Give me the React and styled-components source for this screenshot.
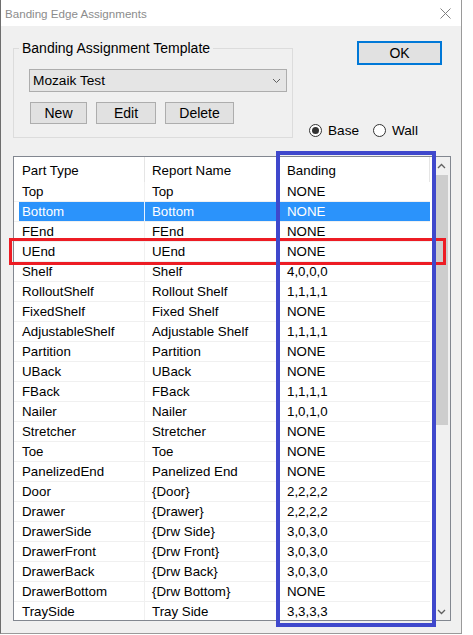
import React from 'react';
import styled, { createGlobalStyle } from 'styled-components';

const GlobalStyle = createGlobalStyle`
  html, body {
    margin: 0;
    padding: 0;
    background: #ffffff;
  }
  body {
    font-family: "Liberation Sans", Arial, sans-serif;
    font-size: 13.3px;
    color: #000;
  }
`;

const Window = styled.div`
  position: relative;
  width: 462px;
  height: 634px;
  box-sizing: border-box;
  border-left: 1px solid #6e6e6e;
  border-right: 1px solid #9a9a9a;
  border-bottom: 1px solid #9a9a9a;
  display: flex;
  flex-direction: column;
  background: #f0f0f0;
  overflow: hidden;
`;

const TitleBar = styled.div`
  height: 26px;
  flex: none;
  background: #ffffff;
  display: flex;
  align-items: center;
  justify-content: space-between;
  padding: 0 10px 0 4px;
`;

const Title = styled.span`
  font-size: 11.6px;
  color: #8c8c8c;
`;

const Body = styled.div`
  flex: 1;
  display: flex;
  flex-direction: column;
  padding: 0 10px 12px 12px;
`;

const TopArea = styled.div`
  display: flex;
  height: 112px;
  flex: none;
`;

const GroupBox = styled.div`
  position: relative;
  width: 280px;
  height: 90px;
  margin-top: 22px;
  box-sizing: border-box;
  border: 1px solid #dcdcdc;
  padding: 20px 0 0 15px;
`;

const Legend = styled.span`
  position: absolute;
  top: -9px;
  left: 5px;
  padding: 0 3px;
  line-height: 16px;
  font-size: 14px;
  background: #f0f0f0;
`;

const Select = styled.div`
  width: 258px;
  height: 23px;
  box-sizing: border-box;
  border: 1px solid #adadad;
  background: #e5e5e5;
  display: flex;
  align-items: center;
  justify-content: space-between;
  padding: 0 5px 0 3px;
  font-size: 13.7px;
`;

const ButtonRow = styled.div`
  display: flex;
  gap: 9px;
  margin: 10px 0 0 1px;
`;

const Button = styled.div`
  width: ${p => p.w}px;
  height: ${p => p.h || 22}px;
  box-sizing: border-box;
  border: ${p => (p.primary ? '2px solid #0078d7' : '1px solid #adadad')};
  background: #e1e1e1;
  display: flex;
  align-items: center;
  justify-content: center;
  font-size: 14px;
`;

const RightColumn = styled.div`
  flex: 1;
  display: flex;
  flex-direction: column;
  align-items: flex-start;
  padding-top: 15px;
`;

const OkWrap = styled.div`
  margin-left: 64px;
`;

const RadioGroup = styled.div`
  display: flex;
  align-items: center;
  margin: 57px 0 0 16px;
  font-size: 13.6px;
  height: 16px;
`;

const RadioLabel = styled.label`
  display: flex;
  align-items: center;
  margin-right: ${p => p.gap || 0}px;
`;

const RadioCircle = styled.span`
  width: 13px;
  height: 13px;
  box-sizing: border-box;
  border-radius: 50%;
  border: 1px solid #333;
  background: #fff;
  display: flex;
  align-items: center;
  justify-content: center;
  margin-right: 6px;

  &::after {
    content: '';
    width: 7px;
    height: 7px;
    border-radius: 50%;
    background: ${p => (p.checked ? '#333' : 'transparent')};
  }
`;

const ListView = styled.div`
  margin-top: 18px;
  height: 465px;
  box-sizing: border-box;
  border: 1px solid #828790;
  background: #ffffff;
  display: flex;
  overflow: hidden;
`;

const ListArea = styled.div`
  flex: 1;
  overflow: hidden;
`;

const Header = styled.div`
  display: flex;
  height: 25px;
`;

const HeaderCell = styled.div`
  width: ${p => p.w}px;
  box-sizing: border-box;
  border-right: 1px solid #e5e5e5;
  padding: 2px 0 0 ${p => p.pad}px;
  display: flex;
  align-items: center;
`;

const Row = styled.div`
  display: flex;
  width: 416px;
  height: 20px;
  box-sizing: border-box;
  padding-left: 5px;
  border-bottom: 1px solid #f0f0f0;
`;

const Cell = styled.div`
  width: ${p => p.w}px;
  box-sizing: border-box;
  padding-left: ${p => p.pad}px;
  display: flex;
  align-items: center;
  white-space: nowrap;
  background: ${p => (p.selected ? '#2b93fb' : 'transparent')};
  color: ${p => (p.selected ? '#ffffff' : '#000000')};
  border-right: ${p => (p.last ? 'none' : `1px solid ${p.selected ? '#e8f2fe' : '#f0f0f0'}`)};
`;

const ScrollBar = styled.div`
  width: 17px;
  flex: none;
  background: #f0f0f0;
  display: flex;
  flex-direction: column;
`;

const ScrollArrow = styled.div`
  height: 17px;
  flex: none;
  display: flex;
  align-items: center;
  justify-content: center;
`;

const ScrollTrack = styled.div`
  flex: 1;
  padding: 1px 2px 0 2px;
`;

const Thumb = styled.div`
  height: 250px;
  background: #cdcdcd;
`;

const Mark = styled.div`
  position: absolute;
  left: ${p => p.x}px;
  top: ${p => p.y}px;
  width: ${p => p.w}px;
  height: ${p => p.h}px;
  box-sizing: border-box;
  border: ${p => p.t || 3}px solid ${p => p.color};
  pointer-events: none;
`;

const rows = [
  ['Top', 'Top', 'NONE'],
  ['Bottom', 'Bottom', 'NONE'],
  ['FEnd', 'FEnd', 'NONE'],
  ['UEnd', 'UEnd', 'NONE'],
  ['Shelf', 'Shelf', '4,0,0,0'],
  ['RolloutShelf', 'Rollout Shelf', '1,1,1,1'],
  ['FixedShelf', 'Fixed Shelf', 'NONE'],
  ['AdjustableShelf', 'Adjustable Shelf', '1,1,1,1'],
  ['Partition', 'Partition', 'NONE'],
  ['UBack', 'UBack', 'NONE'],
  ['FBack', 'FBack', '1,1,1,1'],
  ['Nailer', 'Nailer', '1,0,1,0'],
  ['Stretcher', 'Stretcher', 'NONE'],
  ['Toe', 'Toe', 'NONE'],
  ['PanelizedEnd', 'Panelized End', 'NONE'],
  ['Door', '{Door}', '2,2,2,2'],
  ['Drawer', '{Drawer}', '2,2,2,2'],
  ['DrawerSide', '{Drw Side}', '3,0,3,0'],
  ['DrawerFront', '{Drw Front}', '3,0,3,0'],
  ['DrawerBack', '{Drw Back}', '3,0,3,0'],
  ['DrawerBottom', '{Drw Bottom}', 'NONE'],
  ['TraySide', 'Tray Side', '3,3,3,3'],
];

const CloseIcon = () => (
  <svg width="11" height="11" viewBox="0 0 11 11">
    <path d="M0.5 0.5 L10.5 10.5 M10.5 0.5 L0.5 10.5" stroke="#808080" strokeWidth="1" fill="none" />
  </svg>
);

const Chevron = ({ up, color = '#404040', weight = 1.3 }) => (
  <svg width="9" height="6" viewBox="0 0 9 6">
    <path
      d={up ? 'M1 5 L4.5 1.5 L8 5' : 'M1 1 L4.5 4.5 L8 1'}
      stroke={color}
      strokeWidth={weight}
      fill="none"
    />
  </svg>
);

const App = () => {
  return (
    <>
      <GlobalStyle />
      <Window>
        <TitleBar>
          <Title>Banding Edge Assignments</Title>
          <CloseIcon />
        </TitleBar>
        <Body>
          <TopArea>
            <GroupBox>
              <Legend>Banding Assignment Template</Legend>
              <Select>
                <span>Mozaik Test</span>
                <Chevron color="#606060" weight={1} />
              </Select>
              <ButtonRow>
                <Button w={57}>New</Button>
                <Button w={60}>Edit</Button>
                <Button w={69}>Delete</Button>
              </ButtonRow>
            </GroupBox>
            <RightColumn>
              <OkWrap>
                <Button primary w={85} h={24}>OK</Button>
              </OkWrap>
              <RadioGroup>
                <RadioLabel gap={14}>
                  <RadioCircle checked />
                  Base
                </RadioLabel>
                <RadioLabel>
                  <RadioCircle />
                  Wall
                </RadioLabel>
              </RadioGroup>
            </RightColumn>
          </TopArea>
          <ListView>
            <ListArea>
              <Header>
                <HeaderCell w={131} pad={8}>Part Type</HeaderCell>
                <HeaderCell w={135} pad={7}>Report Name</HeaderCell>
                <HeaderCell w={150} pad={7}>Banding</HeaderCell>
              </Header>
              {rows.map(([part, report, banding], i) => {
                const selected = i === 1;
                return (
                  <Row key={part}>
                    <Cell w={126} pad={3} selected={selected}>{part}</Cell>
                    <Cell w={135} pad={7} selected={selected}>{report}</Cell>
                    <Cell w={150} pad={7} selected={selected} last>{banding}</Cell>
                  </Row>
                );
              })}
            </ListArea>
            <ScrollBar>
              <ScrollArrow><Chevron up color="#606060" /></ScrollArrow>
              <ScrollTrack><Thumb /></ScrollTrack>
              <ScrollArrow><Chevron color="#606060" /></ScrollArrow>
            </ScrollBar>
          </ListView>
        </Body>
        <Mark color="#ed1c24" x={8} y={238} w={437} h={27} />
        <Mark color="#3f48cc" t={4} x={275} y={151} w={160} h={476} />
      </Window>
    </>
  );
};

export default App;
